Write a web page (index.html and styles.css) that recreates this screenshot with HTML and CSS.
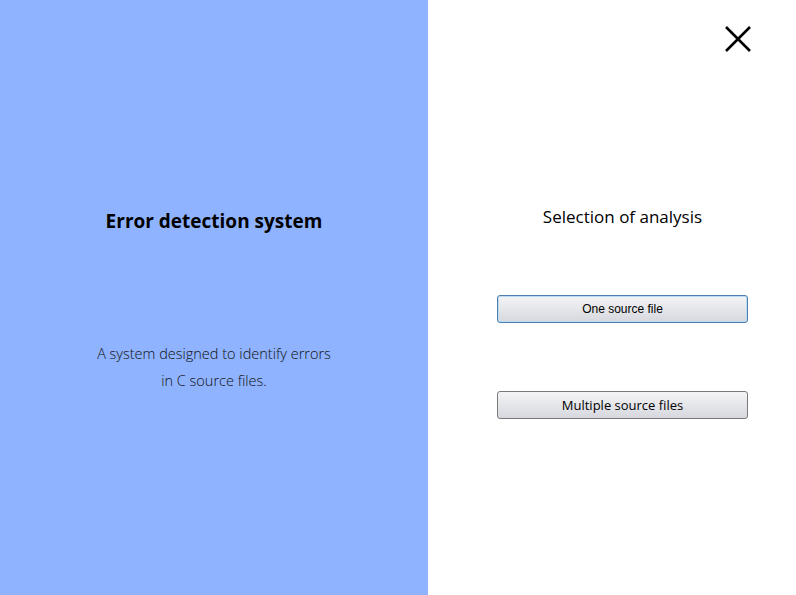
FILE: index.html
```html
<!DOCTYPE html>
<html>
<head>
<meta charset="utf-8">
<link rel="stylesheet" href="styles.css">
</head>
<body>
<div class="app">
  <section class="intro">
    <h1 class="intro-title">Error detection system</h1>
    <p class="intro-desc">A system designed to identify errors<br>in C source files.</p>
  </section>
  <section class="choice">
    <div class="topbar">
      <button class="close" aria-label="Close">
        <svg width="26" height="26" viewBox="0 0 26 26"><path d="M1 1 L25 25 M25 1 L1 25" stroke="#000" stroke-width="2.6" fill="none"/></svg>
      </button>
    </div>
    <div class="choice-body">
      <h2 class="choice-title">Selection of analysis</h2>
      <button class="btn btn-focus">One source file</button>
      <button class="btn btn-large">Multiple source files</button>
    </div>
  </section>
</div>
</body>
</html>
```
FILE: styles.css
```css
html, body { margin: 0; padding: 0; }
body { width: 796px; height: 595px; overflow: hidden; background: #fff; font-family: "Open Sans", "Noto Sans", sans-serif; }
.app { display: flex; height: 595px; }
.intro {
  width: 428px; background: #8fb3ff; display: flex; flex-direction: column; align-items: center;
  padding-top: 208px; box-sizing: border-box;
}
.intro-title { margin: 0; font-size: 19px; font-weight: 700; line-height: 26px; color: #000; }
.intro-desc { margin: 106px 0 0; font-size: 14.5px; font-weight: 300; line-height: 27px; text-align: center; color: #111; }
.choice { flex: 1; display: flex; flex-direction: column; }
.topbar { display: flex; justify-content: flex-end; padding: 26px 45px 0 0; }
.close { border: 0; background: none; padding: 0; width: 26px; height: 26px; cursor: pointer; display: block; }
.close svg { display: block; }
.choice-body { display: flex; flex-direction: column; align-items: center; padding: 153px 48px 0 69px; }
.choice-title { margin: 0; font-size: 17px; font-weight: 400; line-height: 24px; color: #000; }
.btn {
  width: 251px; height: 28px; box-sizing: border-box; border: 1px solid #7a7a7a; border-radius: 3px;
  background: linear-gradient(#f4f4f6, #d6d8de);
  font-family: "Liberation Sans", Arial, sans-serif; font-size: 12px; color: #000; padding: 0;
}
.btn-focus { margin-top: 66px; border-color: #4d7fae; box-shadow: inset 0 0 0 1px #bcdcf2; }
.btn-large { margin-top: 68px; font-size: 13px; font-family: "Open Sans", sans-serif; }
```
